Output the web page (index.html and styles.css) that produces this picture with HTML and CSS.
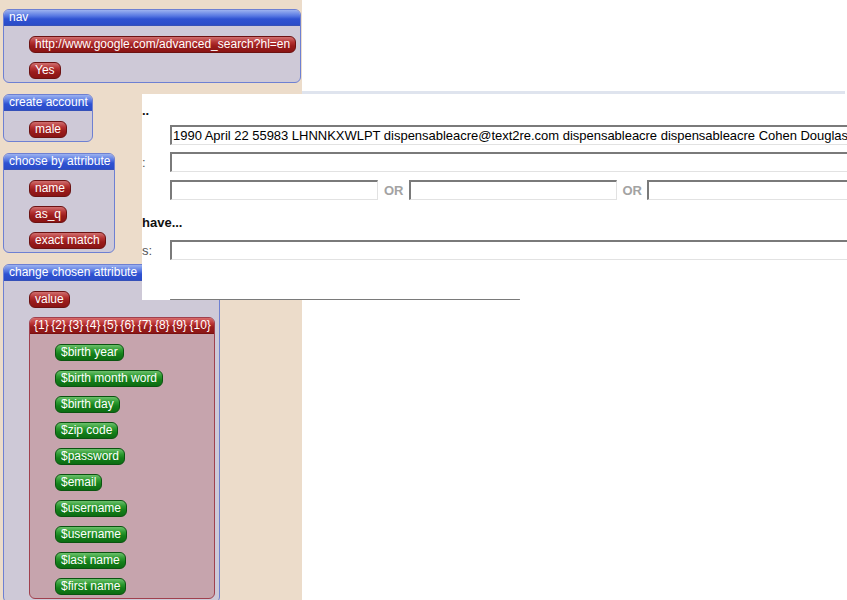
FILE: index.html
```html
<!DOCTYPE html>
<html>
<head>
<meta charset="utf-8">
<link rel="stylesheet" href="styles.css">
</head>
<body>
<div class="page">
  <div class="panel">
    <div class="box">
      <div class="box-head">nav</div>
      <div class="box-body">
        <span class="pill red">http://www.google.com/advanced_search?hl=en</span>
        <span class="pill red">Yes</span>
      </div>
    </div>
    <div class="box">
      <div class="box-head">create account</div>
      <div class="box-body">
        <span class="pill red">male</span>
      </div>
    </div>
    <div class="box">
      <div class="box-head">choose by attribute</div>
      <div class="box-body">
        <span class="pill red">name</span>
        <span class="pill red">as_q</span>
        <span class="pill red">exact match</span>
      </div>
    </div>
    <div class="box box-last">
      <div class="box-head">change chosen attribute</div>
      <div class="box-body">
        <span class="pill red">value</span>
        <div class="group">
          <div class="group-head">{1} {2} {3} {4} {5} {6} {7} {8} {9} {10}</div>
          <div class="group-body">
            <span class="pill green">$birth year</span>
            <span class="pill green">$birth month word</span>
            <span class="pill green">$birth day</span>
            <span class="pill green">$zip code</span>
            <span class="pill green">$password</span>
            <span class="pill green">$email</span>
            <span class="pill green">$username</span>
            <span class="pill green">$username</span>
            <span class="pill green">$last name</span>
            <span class="pill green">$first name</span>
          </div>
        </div>
      </div>
    </div>
  </div>
  <div class="main">
    <div class="strip"></div>
  </div>
</div>
<div class="shot">
  <div class="heading first">..</div>
  <div class="row r1">
    <span class="label"></span>
    <span class="field wide">1990 April 22 55983 LHNNKXWLPT dispensableacre@text2re.com dispensableacre dispensableacre Cohen Douglas</span>
  </div>
  <div class="row r2">
    <span class="label">:</span>
    <span class="field wide"></span>
  </div>
  <div class="row r3">
    <span class="label"></span>
    <span class="field short"></span>
    <span class="or">OR</span>
    <span class="field short"></span>
    <span class="or">OR</span>
    <span class="field short"></span>
  </div>
  <div class="heading second">have...</div>
  <div class="row r4">
    <span class="label">s:</span>
    <span class="field wide"></span>
  </div>
  <div class="row r5">
    <span class="label"></span>
    <span class="select"></span>
  </div>
</div>
</body>
</html>
```

FILE: styles.css
```css
html, body {
  margin: 0;
  padding: 0;
  background: #ffffff;
  font-family: "Liberation Sans", Arial, sans-serif;
  overflow: hidden;
}

.page {
  display: flex;
  width: 847px;
  height: 600px;
}

.panel {
  width: 297px;
  height: 591px;
  padding: 9px 2px 0 3px;
  background: #ecdcca;
  display: flex;
  flex-direction: column;
  align-items: flex-start;
  gap: 11px;
  box-sizing: content-box;
  overflow: hidden;
}

.main {
  flex: 1;
  padding-top: 91px;
}

.strip {
  height: 3px;
  margin-right: 2px;
  background: #dfe4ee;
}

.box {
  border: 1px solid #6e80d2;
  border-radius: 6px;
  background: #cec9d7;
  overflow: hidden;
  flex-shrink: 0;
}

.box-head {
  height: 15px;
  line-height: 15px;
  padding: 0 4px 0 5px;
  font-size: 12px;
  color: #ffffff;
  white-space: nowrap;
  background: linear-gradient(#9cb2f0 0%, #5677e2 40%, #2f52d2 60%, #2a4cc8 100%);
  border-bottom: 1px solid #3550b8;
}

.box-body {
  display: flex;
  flex-direction: column;
  align-items: flex-start;
  gap: 9px;
  padding: 10px 4px 3px 25px;
}

.pill {
  display: inline-block;
  height: 15px;
  line-height: 15px;
  padding: 0 5px;
  font-size: 12px;
  color: #ffffff;
  white-space: nowrap;
  border-radius: 6px;
}

.red {
  background: linear-gradient(#d07070 0%, #b43232 35%, #9a1c1c 60%, #8a1414 100%);
  border: 1px solid #6c1212;
}

.green {
  background: linear-gradient(#6cc06c 0%, #2c9a30 35%, #14801a 60%, #0c6c12 100%);
  border: 1px solid #0a5410;
}

.group {
  border: 1px solid #a0404e;
  border-radius: 6px;
  background: #c6a4ad;
  overflow: hidden;
}

.group-head {
  height: 15px;
  line-height: 15px;
  padding: 0 3px 0 4px;
  font-size: 12px;
  color: #ffffff;
  white-space: nowrap;
  word-spacing: -0.75px;
  background: linear-gradient(#d86a6a 0%, #b83030 40%, #9a1c1c 60%, #8c1616 100%);
  border-bottom: 1px solid #7a1010;
}

.group-body {
  display: flex;
  flex-direction: column;
  align-items: flex-start;
  gap: 9px;
  padding: 10px 4px 3px 25px;
}

/* floating screenshot window over the panel */
.shot {
  position: absolute;
  left: 142px;
  top: 94px;
  width: 705px;
  height: 206px;
  background: #ffffff;
  overflow: hidden;
  padding-top: 9px;
  box-sizing: border-box;
}

.heading {
  font-size: 13px;
  font-weight: bold;
  line-height: 16px;
  height: 16px;
  color: #111111;
  white-space: nowrap;
}

.row {
  display: flex;
  align-items: center;
  white-space: nowrap;
}

.r1 { margin-top: 6px; }
.r2 { margin-top: 7px; }
.r3 { margin-top: 8px; }
.second { margin-top: 15px; }
.r4 { margin-top: 9px; }
.r5 { margin-top: 39px; }

.label {
  width: 28px;
  flex-shrink: 0;
  font-size: 13px;
  color: #555555;
}

.field {
  display: block;
  height: 17px;
  line-height: 17px;
  border-top: 2px solid #7a7a7a;
  border-left: 2px solid #7a7a7a;
  border-bottom: 1px solid #e2e2e2;
  border-right: 1px solid #e2e2e2;
  font-size: 13px;
  letter-spacing: -0.02px;
  color: #000000;
  padding-left: 1px;
  flex-shrink: 0;
  overflow: hidden;
}

.wide { width: 760px; }
.short { width: 204px; }

.or {
  font-size: 13px;
  font-weight: bold;
  color: #a3a3a3;
  margin: 0 5px 0 6px;
}

.select {
  display: block;
  width: 348px;
  height: 10px;
  border-top: 2px solid #7a7a7a;
  border-left: 1px solid #9a9a9a;
  border-right: 1px solid #9a9a9a;
}
```
